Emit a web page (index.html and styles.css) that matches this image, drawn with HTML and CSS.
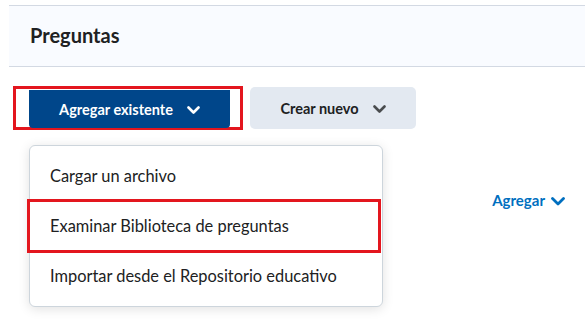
FILE: index.html
```html
<!DOCTYPE html>
<html lang="es">
<head>
    <meta charset="UTF-8">
    <title>Preguntas</title>
    <link rel="stylesheet" href="styles.css">
</head>
<body>
    <div class="page-header">
        <h1>Preguntas</h1>
    </div>

    <div class="content">
        <div class="toolbar">
            <div class="mark">
                <button class="btn btn-primary">Agregar existente
                    <svg class="chev" width="13" height="9" viewBox="0 0 13 9"><path d="M1.5 1.5 L6.5 6.5 L11.5 1.5" fill="none" stroke="currentColor" stroke-width="2.6" stroke-linecap="round" stroke-linejoin="round"/></svg>
                </button>
            </div>
            <button class="btn btn-secondary">Crear nuevo
                <svg class="chev" width="13" height="9" viewBox="0 0 13 9"><path d="M1.5 1.5 L6.5 6.5 L11.5 1.5" fill="none" stroke="currentColor" stroke-width="2.6" stroke-linecap="round" stroke-linejoin="round"/></svg>
            </button>

            <div class="menu">
                <div class="menu-item">Cargar un archivo</div>
                <div class="menu-item">Examinar Biblioteca de preguntas</div>
                <div class="menu-item">Importar desde el Repositorio educativo</div>
                <div class="menu-mark"></div>
            </div>
        </div>

        <div class="list-row">
            <a class="link" href="#">Agregar
                <svg class="chev" width="14" height="9" viewBox="0 0 14 9"><path d="M1.5 1.5 L7 7 L12.5 1.5" fill="none" stroke="currentColor" stroke-width="2.8" stroke-linecap="round" stroke-linejoin="round"/></svg>
            </a>
        </div>
    </div>
</body>
</html>
```

FILE: styles.css
```css
* {
    margin: 0;
    padding: 0;
    box-sizing: border-box;
}

body {
    font-family: 'Lato', 'Open Sans', sans-serif;
    background: #ffffff;
    color: #202122;
    width: 585px;
    height: 319px;
    overflow: hidden;
}

.page-header {
    margin: 5px 0 0 9px;
    height: 62px;
    background: #f9fbff;
    border-top: 1px solid #d3d9e3;
    border-bottom: 1px solid #d3d9e3;
    display: flex;
    align-items: center;
    padding-left: 21px;
}

.page-header h1 {
    font-size: 20px;
    font-weight: 700;
    color: #202122;
    margin-top: -3px;
}

.content {
    padding-left: 13px;
}

.toolbar {
    position: relative;
    display: flex;
    align-items: center;
    gap: 7px;
    margin-top: 19px;
}

.mark {
    border: 3px solid #e3161e;
    padding: 1px 10px 0 13px;
    height: 44px;
}

.btn {
    display: flex;
    align-items: center;
    justify-content: center;
    gap: 14px;
    border: none;
    border-radius: 5px;
    font-family: inherit;
    font-size: 14.5px;
    font-weight: 700;
    cursor: pointer;
}

.btn-primary {
    width: 201px;
    height: 38px;
    background: #00468a;
    color: #ffffff;
    border-radius: 0 0 4px 4px;
}

.btn-secondary {
    width: 166px;
    height: 42px;
    background: #e3e9f1;
    color: #202122;
}

.btn-secondary .chev {
    color: #494c4e;
}

.chev {
    display: block;
    margin-top: 2px;
}

.menu {
    position: absolute;
    left: 16px;
    top: 59px;
    width: 354px;
    height: 162px;
    background: #ffffff;
    border: 1px solid #cdd5dc;
    border-radius: 6px;
    box-shadow: 0 2px 12px rgba(0, 0, 0, 0.12);
    padding-top: 4px;
    z-index: 2;
}

.menu-item {
    height: 50px;
    display: flex;
    align-items: center;
    padding-left: 20px;
    font-size: 16.4px;
    color: #202122;
}

.menu-mark {
    position: absolute;
    left: -3px;
    top: 53px;
    width: 354px;
    height: 54px;
    border: 3px solid #e3161e;
}

.list-row {
    display: flex;
    justify-content: flex-end;
    padding-right: 20px;
    margin-top: 61px;
}

.link {
    display: flex;
    align-items: center;
    gap: 6px;
    color: #006fbf;
    font-size: 15px;
    font-weight: 700;
    text-decoration: none;
}
```
